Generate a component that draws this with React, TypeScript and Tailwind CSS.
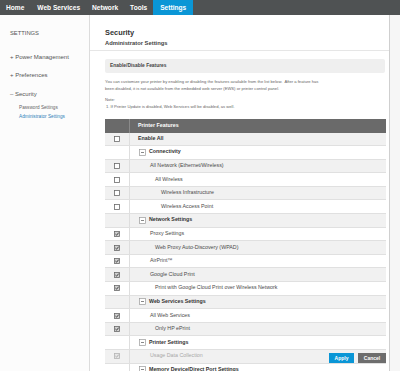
import React from 'react';

type Row = {
  label: string;
  level: number;
  group?: boolean;
  bold?: boolean;
  checked?: boolean;
  disabled?: boolean;
};

const ROWS: Row[] = [
  { label: 'Enable All', level: 0, bold: true },
  { label: 'Connectivity', level: 0, group: true },
  { label: 'All Network (Ethernet/Wireless)', level: 1 },
  { label: 'All Wireless', level: 2 },
  { label: 'Wireless Infrastructure', level: 3 },
  { label: 'Wireless Access Point', level: 3 },
  { label: 'Network Settings', level: 0, group: true },
  { label: 'Proxy Settings', level: 1, checked: true },
  { label: 'Web Proxy Auto-Discovery (WPAD)', level: 2, checked: true },
  { label: 'AirPrint™', level: 1, checked: true },
  { label: 'Google Cloud Print', level: 1, checked: true },
  { label: 'Print with Google Cloud Print over Wireless Network', level: 2, checked: true },
  { label: 'Web Services Settings', level: 0, group: true },
  { label: 'All Web Services', level: 1, checked: true },
  { label: 'Only HP ePrint', level: 2, checked: true },
  { label: 'Printer Settings', level: 0, group: true },
  { label: 'Usage Data Collection', level: 1, checked: true, disabled: true },
  { label: 'Memory Device/Direct Port Settings', level: 0, group: true },
];

const INDENT = ['pl-[8px]', 'pl-[20px]', 'pl-[25px]', 'pl-[31px]'];

function Checkbox({ checked, disabled }: { checked?: boolean; disabled?: boolean }) {
  const stroke = disabled ? '#b5b5b5' : '#6a6a6a';
  return (
    <svg width="6" height="6" viewBox="0 0 6 6" className="block">
      <rect x="0.5" y="0.5" width="5" height="5" fill={checked ? (disabled ? '#e6e6e6' : '#d0d0d0') : '#fff'} stroke={stroke} strokeWidth="0.8" />
      {checked && <path d="M1.4 3 L2.6 4.2 L4.7 1.6" fill="none" stroke={disabled ? '#a8a8a8' : '#333'} strokeWidth="0.9" />}
    </svg>
  );
}

function MinusBox() {
  return (
    <svg width="7" height="7" viewBox="0 0 7 7" className="block shrink-0">
      <rect x="0.5" y="0.5" width="6" height="6" fill="#fff" stroke="#9a9a9a" strokeWidth="0.7" />
      <path d="M2 3.5 H5" stroke="#555" strokeWidth="0.7" />
    </svg>
  );
}

export default function App() {
  return (
    <div className="relative w-[400px] h-[371px] overflow-hidden bg-white text-[#333] font-['Liberation_Sans',Arial,sans-serif]">
      {/* Top nav */}
      <div className="flex h-[15px] bg-[#4f5253] text-white font-bold text-[6.6px] leading-[15px]">
        <div className="pl-[6px] pr-[7px]">Home</div>
        <div className="px-[6px]">Web Services</div>
        <div className="px-[6px]">Network</div>
        <div className="px-[6px]">Tools</div>
        <div className="px-[7px] bg-[#0a96d6]">Settings</div>
      </div>

      <div className="flex h-[356px]">
        {/* Sidebar */}
        <div className="w-[90px] shrink-0 border-r border-[#dcdcdc] bg-[#fcfcfc] pl-[10px] text-[#555]">
          <div className="mt-[14px] text-[5.8px] leading-[8px]">SETTINGS</div>
          <div className="mt-[16px] text-[6px] leading-[8px]">+ Power Management</div>
          <div className="mt-[10px] text-[6px] leading-[8px]">+ Preferences</div>
          <div className="mt-[11px] text-[6px] leading-[8px]">– Security</div>
          <div className="pl-[9px] mt-[5px] text-[4.7px] leading-[9px] text-[#666]">
            <div>Password Settings</div>
            <div className="text-[#2c7fb8]">Administrator Settings</div>
          </div>
        </div>

        {/* Main */}
        <div className="w-[300px] shrink-0 border-r border-[#cfcfcf] bg-white pl-[15px] pr-[4px]">
          <div className="pt-[13px] pb-[3px] border-b border-[#e6e6e6] -ml-[15px] -mr-[4px] pl-[15px]">
            <div className="font-bold text-[7.4px] leading-[10px] text-[#333]">Security</div>
            <div className="mt-[1px] font-bold text-[5.8px] leading-[8px] text-[#444]">Administrator Settings</div>
          </div>

          <div className="mt-[8px] h-[14px] rounded-[2px] bg-[#efefef] pl-[5px] text-[4.9px] font-bold leading-[14px] text-[#444]">
            Enable/Disable Features
          </div>

          <div className="mt-[5px] text-[4.15px] leading-[7px] text-[#666]">
            <div>You can customize your printer by enabling or disabling the features available from the list below.&nbsp; After a feature has</div>
            <div>been disabled, it is not available from the embedded web server (EWS) or printer control panel.</div>
          </div>

          <div className="mt-[4px] text-[4.15px] leading-[7px] text-[#666]">
            <div>Note:</div>
            <div className="pl-[1px]">1. If Printer Update is disabled, Web Services will be disabled, as well.</div>
          </div>

          <div className="mt-[9px] w-[281px] text-[5.3px]">
            <div className="flex h-[13.5px] bg-[#6a6a6a] text-white font-bold">
              <div className="w-[25px] border-r border-[#8a8a8a]" />
              <div className="pl-[8px] leading-[13.5px]">Printer Features</div>
            </div>
            {ROWS.map((r, i) => (
              <div
                key={i}
                className={`flex h-[13.6px] border-b border-[#e0e0e0] ${i % 2 === 0 ? 'bg-[#f1f1f1]' : 'bg-white'}`}
              >
                <div className="w-[25px] shrink-0 flex items-center justify-center border-r border-[#dedede]">
                  {!r.group && <Checkbox checked={r.checked} disabled={r.disabled} />}
                </div>
                {r.group ? (
                  <div className="flex items-center gap-[3px] pl-[9px] font-bold text-[#333]">
                    <MinusBox />
                    <span>{r.label}</span>
                  </div>
                ) : (
                  <div
                    className={`flex items-center ${INDENT[r.level]} ${r.bold ? 'font-bold text-[#333]' : r.disabled ? 'text-[#a8a8a8]' : 'text-[#4a4a4a]'}`}
                  >
                    {r.label}
                  </div>
                )}
              </div>
            ))}
          </div>
        </div>

        <div className="flex-1 bg-[#f6f6f6]" />
      </div>

      {/* Floating action buttons */}
      <div className="absolute left-[329px] top-[353px] flex gap-[4px] text-[5px] font-bold text-white">
        <button className="w-[25px] h-[10px] bg-[#0a96d6] leading-[10px]">Apply</button>
        <button className="w-[28px] h-[10px] bg-[#6d6d6d] leading-[10px]">Cancel</button>
      </div>
    </div>
  );
}
